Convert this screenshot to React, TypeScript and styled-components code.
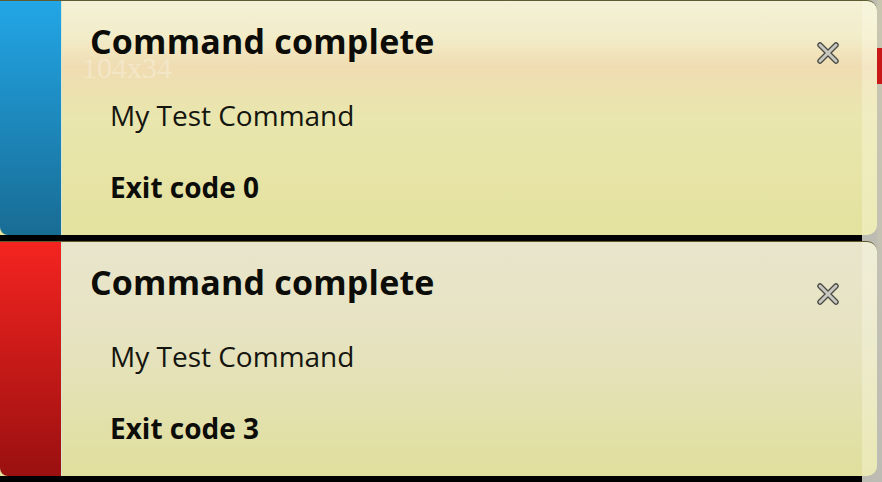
import React from "react";
import styled, {createGlobalStyle} from "styled-components";

const GlobalStyle = createGlobalStyle`
    html, body {
        margin: 0;
        padding: 0;
        background: #000;
    }
    body {
        font-family: "Open Sans", "DejaVu Sans", sans-serif;
    }
`

const Page = styled.div`
    display: flex;
    width: 882px;
    height: 482px;
    background: #000;
    overflow: hidden;
`

const Stack = styled.div`
    display: flex;
    flex-direction: column;
    gap: 6px;
    width: 877px;
    background: linear-gradient(to right, #000 862px, #bdbcb2 862px);
`

const Gutter = styled.div`
    flex: 1;
    display: flex;
    flex-direction: column;
    background: linear-gradient(#c9c6b0, #bdbcb4);
`

const GutterMark = styled.div`
    margin-top: 48px;
    height: 36px;
    background: #c81818;
`

interface StripeProps {
    top: string
    bottom: string
}

const Card = styled.div<{ tint: string }>`
    position: relative;
    display: flex;
    height: 234px;
    border-radius: 0 10px 10px 0;
    border-top: 1px solid #5f5a30;
    overflow: hidden;
    background: ${props => props.tint};
`

const Stripe = styled.div<StripeProps>`
    width: 61px;
    flex-shrink: 0;
    border-right: 1px solid #d8e6d0;
    border-radius: 0 0 0 8px;
    background: linear-gradient(${props => props.top}, ${props => props.bottom});
`

const Body = styled.div`
    flex: 1;
    display: flex;
    flex-direction: column;
    padding: 18px 0 0 28px;
    position: relative;
`

const Edge = styled.div`
    position: absolute;
    right: 0;
    top: 0;
    bottom: 0;
    width: 15px;
    background: rgba(255, 255, 240, 0.3);
`

const Title = styled.div`
    font-size: 34px;
    font-weight: bold;
    line-height: 44px;
    color: #0c0c08;
    letter-spacing: 0.2px;
`

const Command = styled.div`
    margin: 35px 0 0 20px;
    font-size: 28px;
    line-height: 34px;
    color: #151510;
`

const ExitCode = styled.div`
    margin: 38px 0 0 20px;
    font-size: 28px;
    font-weight: bold;
    line-height: 34px;
    color: #0c0c08;
`

const Ghost = styled.div`
    position: absolute;
    left: 20px;
    top: 50px;
    font-family: "Liberation Serif", serif;
    font-size: 30px;
    color: rgba(255, 255, 255, 0.28);
`

const Close = styled.div`
    position: absolute;
    right: 37px;
    top: 40px;
    width: 24px;
    height: 24px;
`

function CloseIcon() {
    return <Close>
        <svg width="24" height="24" viewBox="0 0 24 24">
            <path d="M4 4 L20 20 M20 4 L4 20" stroke="#4a4a44" strokeWidth="5.5" strokeLinecap="round"/>
            <path d="M4 4 L20 20 M20 4 L4 20" stroke="#c8c8c0" strokeWidth="3" strokeLinecap="round"/>
        </svg>
    </Close>
}

function Notification(props: { top: string, bottom: string, tint: string, code: number, ghost?: boolean }) {
    const {top, bottom, tint, code, ghost} = props
    return <Card tint={tint}>
        <Stripe top={top} bottom={bottom}/>
        <Body>
            {ghost && <Ghost>104x34</Ghost>}
            <Edge/>
            <Title>Command complete</Title>
            <Command>My Test Command</Command>
            <ExitCode>Exit code {code}</ExitCode>
            <CloseIcon/>
        </Body>
    </Card>
}

export default function App() {
    return <Page>
        <GlobalStyle/>
        <Stack>
            <Notification
                top="#22a6e6" bottom="#186c94" code={0} ghost
                tint="linear-gradient(#f3f1d6 0%, #f2ecc8 16%, #f0dcb2 28%, #ede0b0 36%, #e9e6ae 50%, #e4e29e 100%)"
            />
            <Notification
                top="#f42420" bottom="#9a1010" code={3}
                tint="linear-gradient(#e9e5cc 0%, #e6e3c2 40%, #e0df9c 100%)"
            />
        </Stack>
        <Gutter>
            <GutterMark/>
        </Gutter>
    </Page>
}
